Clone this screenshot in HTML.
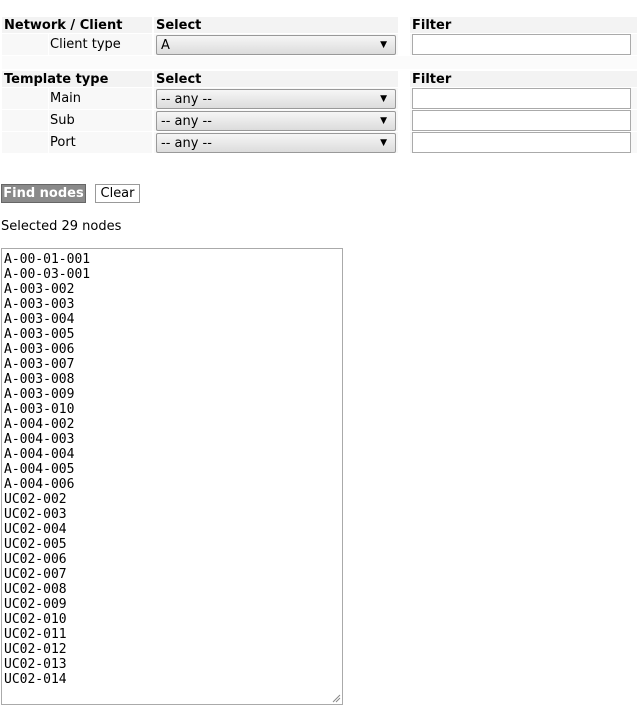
<!DOCTYPE html>
<html><head><meta charset="utf-8"><style>
body{margin:0;width:637px;height:711px;background:#fff;font-family:"DejaVu Sans","Liberation Sans",sans-serif;font-size:13px;color:#000;position:relative;overflow:hidden}
.c{position:absolute;background:#f8f8f8}
.h{position:absolute;background:#f3f3f3;font-weight:bold;font-size:13px;line-height:16px;padding:1px 0 0 2px;box-sizing:border-box}
.l{position:absolute;font-size:13px;line-height:20px}
.sel{position:absolute;left:156px;width:240px;height:20px;box-sizing:border-box;border:1px solid #999;border-radius:2px;background:linear-gradient(#f6f6f6,#dcdcdc);font-size:13px;line-height:19px;padding-left:4px}
.sel:after{content:"▼";position:absolute;right:8px;top:0;font-size:9px}
.inp{position:absolute;left:412px;width:219px;height:21px;box-sizing:border-box;border:1px solid #aaa;background:#fff}
</style></head><body>
<div class="h" style="left:2px;top:17px;width:150px;height:16px">Network / Client</div>
<div class="h" style="left:154px;top:17px;width:244px;height:16px">Select</div>
<div class="h" style="left:410px;top:17px;width:227px;height:16px">Filter</div>
<div class="c" style="left:2px;top:34px;width:46px;height:21px"></div>
<div class="c" style="left:49px;top:34px;width:103px;height:21px"></div>
<div class="c" style="left:154px;top:34px;width:244px;height:21px"></div>
<div class="c" style="left:410px;top:34px;width:227px;height:21px"></div>
<div class="c" style="left:2px;top:56px;width:635px;height:13px;background:#fbfbfb"></div>
<div class="sel" style="top:35px">A</div>
<div class="inp" style="top:34px"></div>

<div class="h" style="left:2px;top:71px;width:150px;height:16px">Template type</div>
<div class="h" style="left:154px;top:71px;width:244px;height:16px">Select</div>
<div class="h" style="left:410px;top:71px;width:227px;height:16px">Filter</div>

<div class="c" style="left:2px;top:88px;width:46px;height:21px"></div><div class="c" style="left:49px;top:88px;width:103px;height:21px"></div><div class="c" style="left:154px;top:88px;width:244px;height:21px"></div><div class="c" style="left:410px;top:88px;width:227px;height:21px"></div>
<div class="c" style="left:2px;top:110px;width:46px;height:21px"></div><div class="c" style="left:49px;top:110px;width:103px;height:21px"></div><div class="c" style="left:154px;top:110px;width:244px;height:21px"></div><div class="c" style="left:410px;top:110px;width:227px;height:21px"></div>
<div class="c" style="left:2px;top:132px;width:46px;height:21px"></div><div class="c" style="left:49px;top:132px;width:103px;height:21px"></div><div class="c" style="left:154px;top:132px;width:244px;height:21px"></div><div class="c" style="left:410px;top:132px;width:227px;height:21px"></div>
<div class="l" style="left:50px;top:35px">Client type</div>
<div class="l" style="left:50px;top:89px">Main</div>
<div class="l" style="left:50px;top:111px">Sub</div>
<div class="l" style="left:50px;top:133px">Port</div>
<div class="sel" style="top:89px">-- any --</div>
<div class="sel" style="top:111px">-- any --</div>
<div class="sel" style="top:133px">-- any --</div>
<div class="inp" style="top:88px"></div>
<div class="inp" style="top:110px"></div>
<div class="inp" style="top:132px"></div>

<div style="position:absolute;left:1px;top:184px;width:85px;height:19px;box-sizing:border-box;background:#8a8a8a;border:1px solid #666;color:#fff;font-weight:bold;font-size:13px;line-height:18px;text-align:center">Find nodes</div>
<div style="position:absolute;left:95px;top:184px;width:45px;height:19px;box-sizing:border-box;background:#fff;border:1px solid #999;font-size:13px;line-height:18px;text-align:center">Clear</div>
<div class="l" style="left:1px;top:217px">Selected 29 nodes</div>

<div style="position:absolute;left:1px;top:248px;width:342px;height:457px;box-sizing:border-box;border:1px solid #aaa;padding:3px 0 0 2px;font-family:'DejaVu Sans Mono','Liberation Mono',monospace;font-size:13px;line-height:15px;white-space:pre">A-00-01-001
A-00-03-001
A-003-002
A-003-003
A-003-004
A-003-005
A-003-006
A-003-007
A-003-008
A-003-009
A-003-010
A-004-002
A-004-003
A-004-004
A-004-005
A-004-006
UC02-002
UC02-003
UC02-004
UC02-005
UC02-006
UC02-007
UC02-008
UC02-009
UC02-010
UC02-011
UC02-012
UC02-013
UC02-014</div>
<svg style="position:absolute;left:332px;top:694px" width="9" height="9"><path d="M1 8L8 1M4 8L8 4" stroke="#888" stroke-width="1"/></svg>
</body></html>
